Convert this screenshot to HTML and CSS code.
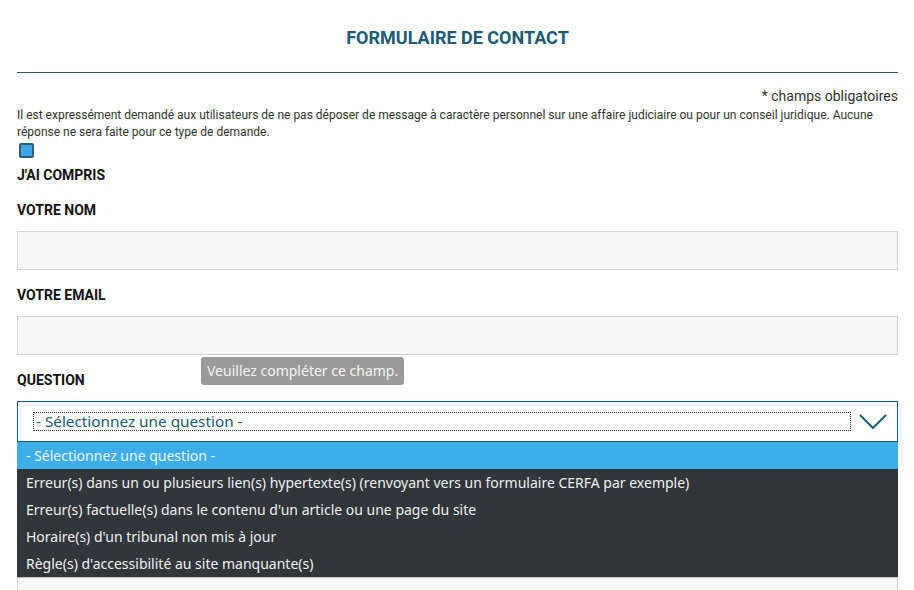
FILE: index.html
```html
<!DOCTYPE html>
<html lang="fr">
<head>
<meta charset="utf-8">
<title>Formulaire de contact</title>
<link rel="stylesheet" href="styles.css">
</head>
<body>
<div class="page">
  <h1 class="title">FORMULAIRE DE CONTACT</h1>
  <hr class="rule">
  <p class="required">* champs obligatoires</p>
  <p class="notice">Il est expressément demandé aux utilisateurs de ne pas déposer de message à caractère personnel sur une affaire judiciaire ou pour un conseil juridique. Aucune réponse ne sera faite pour ce type de demande.</p>
  <span class="checkbox"></span>
  <div class="label label-check">J'AI COMPRIS</div>

  <div class="label">VOTRE NOM</div>
  <div class="input"></div>

  <div class="label">VOTRE EMAIL</div>
  <div class="input"></div>

  <div class="label-row">
    <div class="label">QUESTION</div>
    <div class="tooltip">Veuillez compléter ce champ.</div>
  </div>
  <div class="select-wrap">
    <div class="select">
      <span class="focus-ring">- Sélectionnez une question -</span>
      <svg class="chevron" width="28" height="18" viewBox="0 0 28 18"><path d="M1 2 L14 15 L27 2" fill="none" stroke="#1d5a73" stroke-width="2"/></svg>
    </div>
    <ul class="options">
      <li class="option selected">- Sélectionnez une question -</li>
      <li class="option">Erreur(s) dans un ou plusieurs lien(s) hypertexte(s) (renvoyant vers un formulaire CERFA par exemple)</li>
      <li class="option">Erreur(s) factuelle(s) dans le contenu d'un article ou une page du site</li>
      <li class="option">Horaire(s) d'un tribunal non mis à jour</li>
      <li class="option">Règle(s) d'accessibilité au site manquante(s)</li>
    </ul>
  </div>

  <div class="textarea"></div>
</div>
</body>
</html>
```
FILE: styles.css
```css
* { box-sizing: border-box; }
html, body { margin: 0; padding: 0; background: #fff; }
body { font-family: Roboto, "Liberation Sans", sans-serif; color: #1a1a1a; }

.page {
  padding: 0 16px 0 17px;
}

.title {
  margin: 0;
  padding-top: 27px;
  height: 72px;
  font-size: 18px;
  line-height: 22px;
  font-weight: 700;
  color: #1d5a73;
  text-align: center;
}

.rule {
  margin: 0;
  border: 0;
  height: 1px;
  background: #2a5566;
}

.required {
  margin: 13px 0 0;
  font-size: 14px;
  line-height: 20px;
  text-align: right;
  color: #333;
}

.notice {
  margin: 1px 0 0;
  font-size: 12px;
  line-height: 17px;
  color: #333;
}

.checkbox {
  display: block;
  margin: 2px 0 0 2px;
  width: 15px;
  height: 15px;
  background: #3fa6e3;
  border: 2px solid #2d5f78;
  border-radius: 2px;
}

.label {
  font-size: 14px;
  font-weight: 700;
  line-height: 20px;
  margin-top: 15px;
  margin-bottom: 11px;
  color: #111;
}
.label-check { margin-top: 7px; margin-bottom: 0; }

.input {
  height: 39px;
  background: #f7f7f7;
  border: 1px solid #d2d2d2;
}

.label-row {
  position: relative;
  display: flex;
  align-items: flex-end;
}
.label-row .label { flex: none; }

.tooltip {
  position: absolute;
  left: 184px;
  top: 2px;
  height: 28px;
  padding: 0 6px;
  background: #9a9a9a;
  color: #f4f4f4;
  border-radius: 3px;
  font-family: "Noto Sans", "Open Sans", sans-serif;
  font-size: 14px;
  line-height: 28px;
  white-space: nowrap;
}

.select-wrap { position: relative; }

.select {
  height: 41px;
  border: 1px solid #1d5a73;
  background: #fff;
  display: flex;
  align-items: center;
  padding: 0 10px 0 15px;
}

.focus-ring {
  flex: 1;
  height: 19px;
  border: 1px dotted #333;
  padding-left: 2px;
  font-family: "Noto Sans", "Open Sans", sans-serif;
  font-size: 15.3px;
  line-height: 16px;
  color: #1d5a73;
}

.chevron { margin-left: 8px; flex: none; }

.options {
  position: absolute;
  left: 0;
  right: 0;
  top: 100%;
  margin: 0;
  padding: 0;
  list-style: none;
  background: #31363b;
  border-bottom: 1px solid #bdbdbd;
  font-family: "Noto Sans", "Open Sans", sans-serif;
  font-size: 14px;
  color: #eff0f1;
  z-index: 2;
}

.option {
  height: 27px;
  line-height: 27px;
  padding-left: 9px;
  white-space: nowrap;
}
.option.selected {
  background: #3daee9;
  color: #eaf6fd;
}

.textarea {
  margin-top: 46px;
  height: 160px;
  background: #f7f7f7;
  border: 1px solid #d2d2d2;
}
```
